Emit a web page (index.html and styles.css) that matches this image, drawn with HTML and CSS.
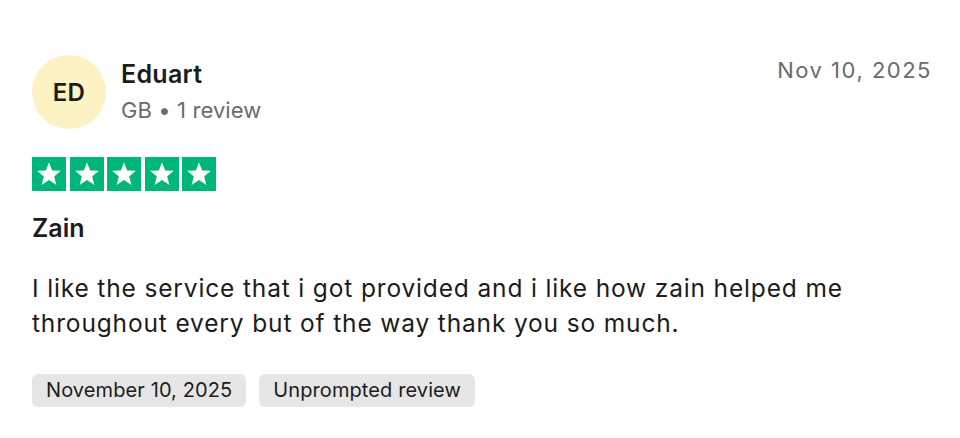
FILE: index.html
```html
<!DOCTYPE html>
<html lang="en">
  <head>
    <meta charset="UTF-8" />
    <meta name="viewport" content="width=device-width, initial-scale=1" />
    <title>Review - Eduart</title>
    <link rel="stylesheet" href="styles.css">
  </head>
  <body>
    <article class="review">
      <header class="review-head">
        <div class="reviewer">
          <div class="avatar">ED</div>
          <div class="reviewer-info">
            <span class="reviewer-name">Eduart</span>
            <span class="reviewer-meta">GB &bull; 1 review</span>
          </div>
        </div>
        <time class="review-date" datetime="2025-11-10">Nov 10, 2025</time>
      </header>

      <div class="stars" aria-label="Rated 5 out of 5 stars">
        <svg class="star" viewBox="-1.5 -1.5 27 27"><rect x="-1.5" y="-1.5" width="27" height="27" /><polygon points="12,2.6 14.5,9.2 21.4,9.5 16.1,13.9 17.9,20.7 12,16.8 6.1,20.7 7.9,13.9 2.6,9.5 9.5,9.2" /></svg>
        <svg class="star" viewBox="-1.5 -1.5 27 27"><rect x="-1.5" y="-1.5" width="27" height="27" /><polygon points="12,2.6 14.5,9.2 21.4,9.5 16.1,13.9 17.9,20.7 12,16.8 6.1,20.7 7.9,13.9 2.6,9.5 9.5,9.2" /></svg>
        <svg class="star" viewBox="-1.5 -1.5 27 27"><rect x="-1.5" y="-1.5" width="27" height="27" /><polygon points="12,2.6 14.5,9.2 21.4,9.5 16.1,13.9 17.9,20.7 12,16.8 6.1,20.7 7.9,13.9 2.6,9.5 9.5,9.2" /></svg>
        <svg class="star" viewBox="-1.5 -1.5 27 27"><rect x="-1.5" y="-1.5" width="27" height="27" /><polygon points="12,2.6 14.5,9.2 21.4,9.5 16.1,13.9 17.9,20.7 12,16.8 6.1,20.7 7.9,13.9 2.6,9.5 9.5,9.2" /></svg>
        <svg class="star" viewBox="-1.5 -1.5 27 27"><rect x="-1.5" y="-1.5" width="27" height="27" /><polygon points="12,2.6 14.5,9.2 21.4,9.5 16.1,13.9 17.9,20.7 12,16.8 6.1,20.7 7.9,13.9 2.6,9.5 9.5,9.2" /></svg>
      </div>

      <h2 class="review-title">Zain</h2>
      <p class="review-text">
        I like the service that i got provided and i like how zain helped me
        throughout every but of the way thank you so much.
      </p>

      <div class="tags">
        <span class="tag">November 10, 2025</span>
        <span class="tag">Unprompted review</span>
      </div>
    </article>
  </body>
</html>
```

FILE: styles.css
```css
body {
  margin: 0;
  background: #fff;
  color: #1c1c1c;
  font-family: Inter, "Noto Sans", "Liberation Sans", sans-serif;
}
.review {
  padding: 55px 28px 0 32px;
}
.review-head {
  display: flex;
  justify-content: space-between;
  align-items: flex-start;
}
.reviewer {
  display: flex;
  gap: 15px;
}
.avatar {
  width: 74px;
  height: 74px;
  border-radius: 50%;
  background: #fcf2c4;
  display: flex;
  align-items: center;
  justify-content: center;
  font-size: 24px;
  font-weight: 600;
  letter-spacing: 0.2px;
}
.reviewer-info {
  display: flex;
  flex-direction: column;
  padding-top: 3px;
}
.reviewer-name {
  font-size: 25px;
  font-weight: 600;
  line-height: 32px;
  letter-spacing: 0.3px;
}
.reviewer-meta {
  margin-top: 5px;
  font-size: 22px;
  line-height: 30px;
  color: #6b6b6b;
  letter-spacing: 0.1px;
}
.review-date {
  font-size: 22px;
  line-height: 30px;
  color: #6b6b6b;
  letter-spacing: 1.5px;
}
.stars {
  display: flex;
  gap: 3.5px;
  margin-top: 28px;
}
.star {
  width: 34px;
  height: 34px;
  display: block;
}
.star rect {
  fill: #00b67a;
}
.star polygon {
  fill: #fff;
}
.review-title {
  margin: 21px 0 0;
  font-size: 25px;
  font-weight: 600;
  line-height: 32px;
}
.review-text {
  margin: 27px 0 0;
  font-size: 24.5px;
  line-height: 34.5px;
  letter-spacing: 0.85px;
}
.tags {
  display: flex;
  gap: 13px;
  margin-top: 34px;
}
.tag {
  background: #e6e6e6;
  border-radius: 6px;
  padding: 0 14px 1px;
  height: 33px;
  box-sizing: border-box;
  display: flex;
  align-items: center;
  font-size: 20px;
  letter-spacing: 0.1px;
}
```
